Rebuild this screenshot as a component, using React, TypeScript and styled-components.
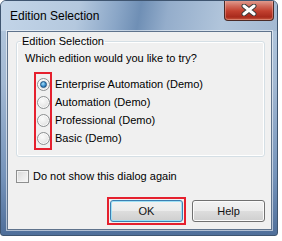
import React from 'react';
import styled, { createGlobalStyle } from 'styled-components';

const GlobalStyle = createGlobalStyle`
  html, body {
    margin: 0;
    padding: 0;
    background: #ffffff;
  }
  body {
    font-family: "Liberation Sans", Arial, sans-serif;
  }
`;

const editions = [
  'Enterprise Automation (Demo)',
  'Automation (Demo)',
  'Professional (Demo)',
  'Basic (Demo)',
];

const App: React.FC = () => {
  return (
    <>
      <GlobalStyle />
      <Window>
        <TitleBar>
          <Title>Edition Selection</Title>
          <CloseButton aria-label="Close">
            <svg width="16" height="12" viewBox="0 0 16 12">
              <path d="M3 2 L13 10 M13 2 L3 10" stroke="#3b3b3b" strokeWidth="5" strokeLinecap="round" />
              <path d="M3 2 L13 10 M13 2 L3 10" stroke="#ffffff" strokeWidth="3" strokeLinecap="round" />
            </svg>
          </CloseButton>
        </TitleBar>
        <Frame>
          <Client>
            <GroupBox>
              <Legend>Edition Selection</Legend>
              <Question>Which edition would you like to try?</Question>
              <Options>
                <Highlight>
                  {editions.map((name, idx) => (
                    <RadioCell key={name}>
                      <Radio checked={idx === 0} />
                    </RadioCell>
                  ))}
                </Highlight>
                <Labels>
                  {editions.map((name) => (
                    <OptionLabel key={name}>{name}</OptionLabel>
                  ))}
                </Labels>
              </Options>
            </GroupBox>

            <CheckRow>
              <CheckBox />
              <CheckLabel>Do not show this dialog again</CheckLabel>
            </CheckRow>

            <ButtonRow>
              <Mark>
                <Button isDefault>OK</Button>
              </Mark>
              <Button>Help</Button>
            </ButtonRow>
          </Client>
        </Frame>
      </Window>
    </>
  );
};

// Styled Components
const Window = styled.div`
  width: 276px;
  border: 1px solid #3f5570;
  border-radius: 6px 6px 3px 3px;
  overflow: hidden;
  background: linear-gradient(to bottom, #b7cbe0 0%, #a3b9d3 35%, #7593ba 75%, #4f6f9a 100%);
`;

const TitleBar = styled.div`
  height: 30px;
  display: flex;
  align-items: flex-start;
  justify-content: space-between;
  background: linear-gradient(100deg, #c3d5e8 0%, #b4c8de 28%, #8aa6c7 42%, #6f8fb5 50%, #94adcb 60%, #b1c5db 80%, #a4b9d2 100%);
`;

const Title = styled.div`
  padding: 8px 0 0 9px;
  font-size: 12px;
  line-height: 15px;
  color: #000000;
`;

const CloseButton = styled.div`
  width: 48px;
  height: 20px;
  margin: -1px 3px 0 0;
  display: flex;
  align-items: center;
  justify-content: center;
  border: 1px solid #4a2a26;
  border-top: none;
  border-radius: 0 0 4px 4px;
  background: linear-gradient(to bottom, #e3a397 0%, #d06a5b 30%, #c2402f 55%, #a82a1c 85%, #c85a40 100%);
  box-shadow: inset 0 0 0 1px rgba(255, 210, 200, 0.35);
`;

const Frame = styled.div`
  padding: 0 5px 5px 6px;
`;

const Client = styled.div`
  display: flex;
  flex-direction: column;
  padding: 2px 6px 4px 8px;
  background: #f0f0f0;
  border: 1px solid #5f738c;
  box-shadow: 0 0 0 1px rgba(255, 255, 255, 0.55);
  font-size: 11px;
  color: #000000;
`;

const GroupBox = styled.fieldset`
  margin: 0;
  padding: 3px 8px 6px 8px;
  border: 1px solid #d5dfe5;
  border-radius: 3px;
  box-shadow: inset 0 0 0 1px #ffffff;
`;

const Legend = styled.legend`
  margin-left: -4px;
  padding: 0 1px;
  font-size: 11px;
  line-height: 14px;
`;

const Question = styled.div`
  line-height: 14px;
`;

const Options = styled.div`
  display: flex;
  margin-top: 7px;
`;

const Highlight = styled.div`
  margin-left: 9px;
  width: 14px;
  padding: 1px 0 1px 0;
  border: 2px solid #e5202e;
  display: flex;
  flex-direction: column;
`;

const RadioCell = styled.div`
  height: 18px;
  display: flex;
  align-items: center;
  justify-content: center;
`;

const Radio = styled.span<{ checked?: boolean }>`
  width: 11px;
  height: 11px;
  border-radius: 50%;
  border: 1px solid #8c8f91;
  display: flex;
  align-items: center;
  justify-content: center;
  background: radial-gradient(circle at 40% 35%, #fbfbfb 0%, #ececec 45%, #d4d4d4 100%);
  box-shadow: inset 0 0 0 1px rgba(255, 255, 255, 0.8);

  &::after {
    content: '';
    display: ${p => (p.checked ? 'block' : 'none')};
    width: 5px;
    height: 5px;
    border-radius: 50%;
    border: 1px solid #1c5180;
    background: radial-gradient(circle at 40% 35%, #a7e0f8 0%, #3b8fcf 55%, #1a4f85 100%);
  }
`;

const Labels = styled.div`
  display: flex;
  flex-direction: column;
  padding: 3px 0 0 3px;
`;

const OptionLabel = styled.div`
  height: 18px;
  line-height: 18px;
  white-space: nowrap;
`;

const CheckRow = styled.div`
  display: flex;
  align-items: center;
  gap: 4px;
  margin-top: 12px;
  height: 14px;
`;

const CheckBox = styled.span`
  width: 11px;
  height: 11px;
  border: 1px solid #8e8f8f;
  background: linear-gradient(135deg, #d6d6d6 0%, #e9e9e9 50%, #f7f7f7 100%);
  box-shadow: inset 0 0 0 1px #f4f4f4;
`;

const CheckLabel = styled.span`
  line-height: 14px;
`;

const ButtonRow = styled.div`
  display: flex;
  justify-content: flex-end;
  align-items: center;
  gap: 6px;
  margin-top: 14px;
`;

const Mark = styled.span`
  display: flex;
  padding: 1px;
  border: 2px solid #e5202e;
`;

const Button = styled.button<{ isDefault?: boolean }>`
  width: 73px;
  height: 22px;
  padding: 0;
  font-family: "Liberation Sans", Arial, sans-serif;
  font-size: 11px;
  color: #111111;
  border: 1px solid ${p => (p.isDefault ? '#3c7fb1' : '#707070')};
  border-radius: 3px;
  background: linear-gradient(to bottom, #f2f2f2 0%, #ebebeb 50%, #dddddd 51%, #cfcfcf 100%);
  box-shadow: inset 0 0 0 1px ${p => (p.isDefault ? '#9ee0f6' : '#fbfbfb')};
`;

export default App;
